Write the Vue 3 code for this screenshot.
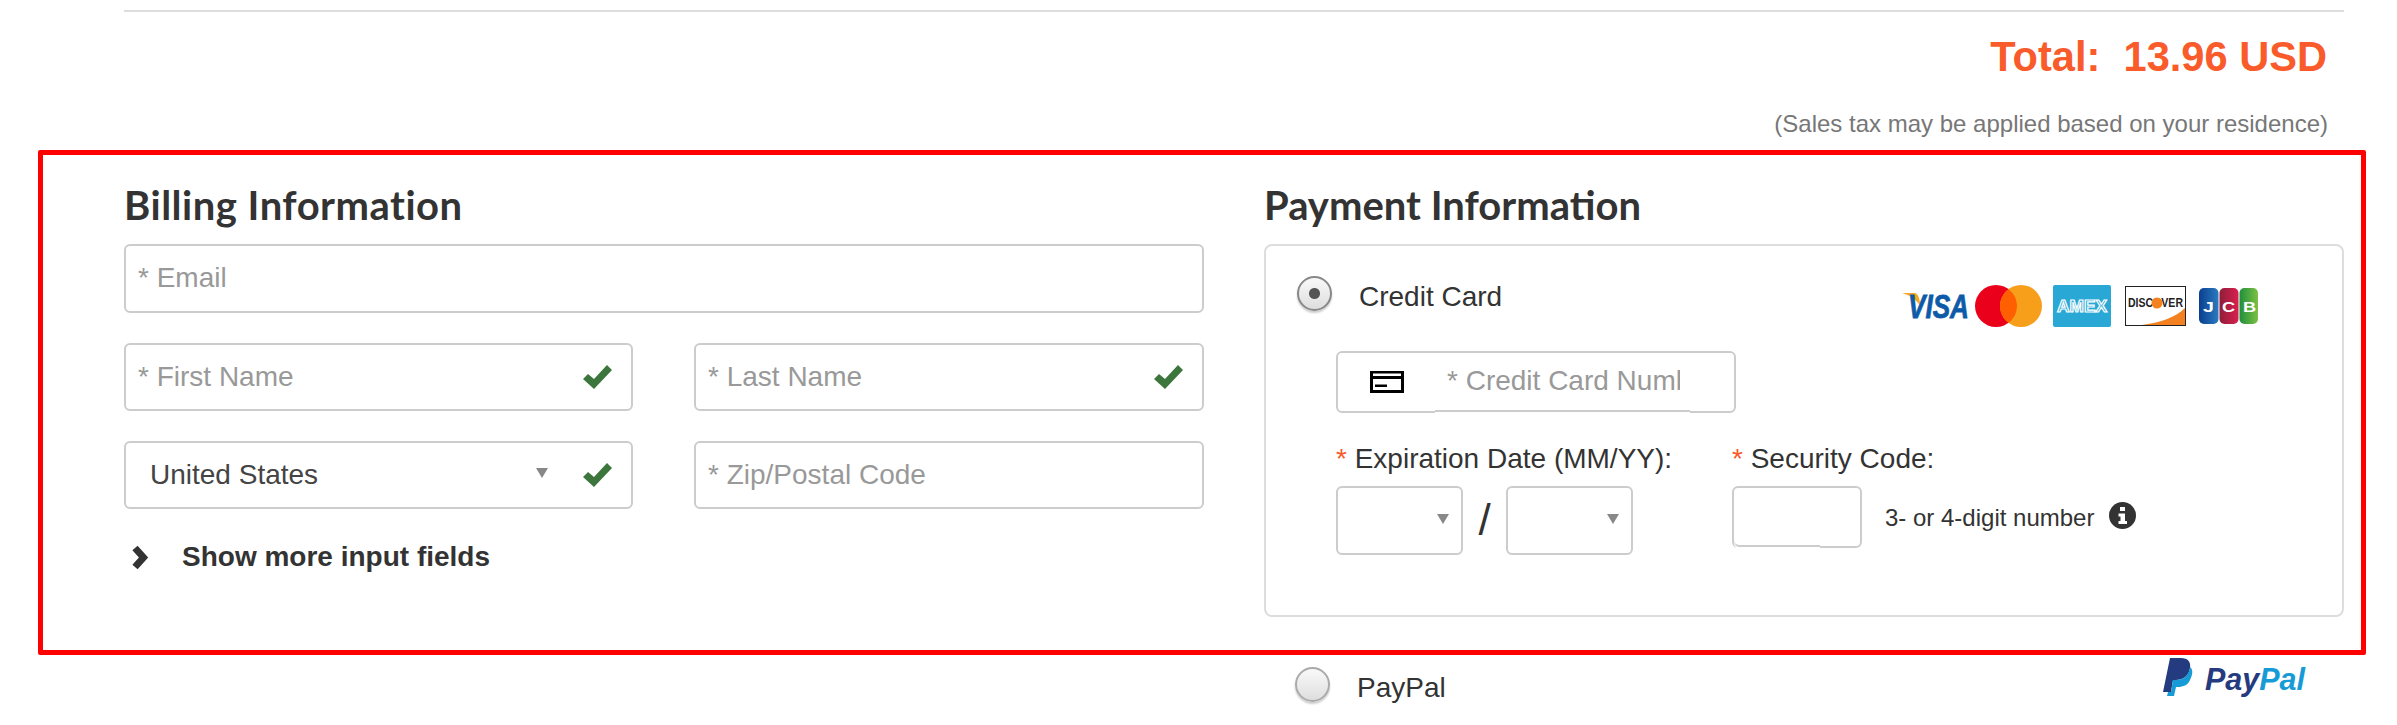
<script setup>
import { ref } from 'vue'

const method = ref('card')
const country = ref('United States')
const months = ['01', '02', '03', '04', '05', '06', '07', '08', '09', '10', '11', '12']
const years = ['24', '25', '26', '27', '28', '29']
</script>

<template>
  <div class="page">
    <div class="rule"></div>
    <div class="total">Total:&nbsp; 13.96 USD</div>
    <div class="tax">(Sales tax may be applied based on your residence)</div>

    <div class="checkout">
      <section class="billing">
        <h2>Billing Information</h2>
        <div class="fields">
          <div class="field wide email">
            <input type="text" placeholder="* Email" />
          </div>
          <div class="field">
            <input type="text" placeholder="* First Name" />
            <svg class="check" viewBox="0 0 29 24"><path d="M0 14 5 9 11 14 24 0 29 5 11 24Z" /></svg>
          </div>
          <div class="field">
            <input type="text" placeholder="* Last Name" />
            <svg class="check" viewBox="0 0 29 24"><path d="M0 14 5 9 11 14 24 0 29 5 11 24Z" /></svg>
          </div>
          <div class="field">
            <select v-model="country" class="country">
              <option>United States</option>
              <option>Canada</option>
            </select>
            <span class="caret"></span>
            <svg class="check" viewBox="0 0 29 24"><path d="M0 14 5 9 11 14 24 0 29 5 11 24Z" /></svg>
          </div>
          <div class="field">
            <input type="text" placeholder="* Zip/Postal Code" />
          </div>
        </div>
        <div class="more">
          <svg class="chevron" viewBox="0 0 19 25"><path d="M5 3 13.500 12.500 5 22" /></svg>
          <span>Show more input fields</span>
        </div>
      </section>

      <section class="payment">
        <h2>Payment Information</h2>
        <div class="panel">
          <div class="method">
            <input v-model="method" class="radio" type="radio" value="card" />
            <span class="method-name">Credit Card</span>
            <svg class="cards" viewBox="0 0 356 42" width="356" height="42">
              <defs>
                <linearGradient id="jcb-blue" x1="0" y1="0" x2="1" y2="0"><stop offset="0" stop-color="#0b3f8f" /><stop offset="1" stop-color="#2a7bc0" /></linearGradient>
                <linearGradient id="jcb-red" x1="0" y1="0" x2="1" y2="0"><stop offset="0" stop-color="#8f1d3a" /><stop offset="1" stop-color="#d9214f" /></linearGradient>
                <linearGradient id="jcb-green" x1="0" y1="0" x2="1" y2="0"><stop offset="0" stop-color="#1f8f3c" /><stop offset="1" stop-color="#7cc144" /></linearGradient>
              </defs>
              <path d="M0 8H12C15 8 16 10 17 13L19 22C15 15 8 10 0 8Z" fill="#f7a823" />
              <text x="6" y="33" class="visa" textLength="61" lengthAdjust="spacingAndGlyphs">VISA</text>
              <circle cx="94" cy="21" r="21" fill="#eb001b" />
              <circle cx="119" cy="21" r="21" fill="#f79e1b" />
              <path d="M106.5 4.13A21 21 0 0 1 106.5 37.87 21 21 0 0 1 106.5 4.13Z" fill="#ff5f00" />
              <rect x="151" width="58" height="42" rx="2" fill="#29a7d5" />
              <text x="155" y="27" class="amex" textLength="50" lengthAdjust="spacingAndGlyphs">AMEX</text>
              <rect x="223.5" y="1.5" width="60" height="39" fill="#fff" stroke="#222" />
              <path d="M240 40Q270 36 283 23V40Z" fill="#f48120" />
              <text x="226" y="22" class="discover" textLength="55" lengthAdjust="spacingAndGlyphs">DISCOVER</text>
              <circle cx="255" cy="18" r="5.500" fill="#f48120" />
              <rect x="297" y="3" width="19.500" height="36" rx="5" fill="url(#jcb-blue)" />
              <rect x="317.500" y="3" width="19" height="36" rx="5" fill="url(#jcb-red)" />
              <rect x="337.500" y="3" width="18.500" height="36" rx="5" fill="url(#jcb-green)" />
              <text transform="translate(301 27) scale(1.4 1)" class="jcb">J</text>
              <text transform="translate(320 27) scale(1.3 1)" class="jcb">C</text>
              <text transform="translate(341 27) scale(1.3 1)" class="jcb">B</text>
            </svg>
          </div>

          <div class="field card-number">
            <svg class="card-icon" viewBox="0 0 34 22">
              <path d="M0 0H34V22H0ZM3 2.500V5H31V2.500ZM3 8V19H31V8ZM5 13.500H17V16H5Z" fill-rule="evenodd" />
            </svg>
            <input class="notched" type="text" placeholder="* Credit Card Number" />
          </div>

          <div class="card-details">
            <div class="expiry">
              <label><b>*</b> Expiration Date (MM/YY):</label>
              <div class="expiry-row">
                <div class="field small">
                  <select><option></option><option v-for="m in months" :key="m">{{ m }}</option></select>
                  <span class="caret"></span>
                </div>
                <span class="slash">/</span>
                <div class="field small">
                  <select><option></option><option v-for="y in years" :key="y">{{ y }}</option></select>
                  <span class="caret"></span>
                </div>
              </div>
            </div>
            <div class="security">
              <label><b>*</b> Security Code:</label>
              <div class="security-row">
                <div class="field cvv">
                  <input class="notched" type="text" />
                </div>
                <span class="hint">3- or 4-digit number</span>
                <svg class="info" viewBox="0 0 27 27">
                  <circle cx="13.500" cy="13.500" r="13.500" fill="#333" />
                  <path d="M11 5H16V9H11ZM9.500 11.500H16V19H18V22H9.500V19H11.500V14.500H9.500Z" fill="#fff" />
                </svg>
              </div>
            </div>
          </div>
        </div>
      </section>
    </div>

    <div class="paypal">
      <input v-model="method" class="radio" type="radio" value="paypal" />
      <span class="method-name">PayPal</span>
      <svg class="paypal-logo" viewBox="0 0 143 40" width="143" height="40">
        <path d="M7 0H18C25 0 28 4 27 10 26 18 20 22 13 22H10L8 34H0Z" fill="#253b80" />
        <path d="M27 9C31 12 29 18 27 22 25 27 20 29 15 29H13L11 38H4L5 34H8L10 22H13C20 22 26 18 27 9Z" fill="#179bd7" />
        <text x="42" y="32" class="paypal-word" textLength="100" lengthAdjust="spacingAndGlyphs"><tspan class="pay">Pay</tspan><tspan class="pal">Pal</tspan></text>
      </svg>
    </div>
  </div>
</template>

<style scoped>
.page {
  width: 2397px;
  height: 725px;
  overflow: hidden;
  font-family: "Liberation Sans", Arial, sans-serif;
  color: #333;
  background: #fff;
}
.rule {
  height: 2px;
  margin: 10px 53px 0 124px;
  background: #ddd;
}
.total {
  margin-top: 20px;
  padding-right: 70px;
  text-align: right;
  font-size: 41.6px;
  line-height: 50px;
  font-weight: bold;
  color: #f95b2b;
}
.tax {
  margin-top: 27px;
  padding-right: 69px;
  text-align: right;
  font-size: 24px;
  line-height: 30px;
  color: #777;
}
.checkout {
  display: flex;
  gap: 60px;
  box-sizing: border-box;
  width: 2328px;
  height: 505px;
  margin: 11px 0 0 38px;
  padding: 25px 0 0 81px;
  border: 5px solid #f00;
  border-radius: 2px;
}
.billing {
  width: 1080px;
}
.payment {
  width: 1080px;
}
h2 {
  margin: 0 0 14px;
  font-family: Lato, "Noto Sans", sans-serif;
  font-size: 40px;
  line-height: 50px;
  font-weight: 700;
  color: #333;
}
.billing h2 {
  letter-spacing: 0.5px;
}
.fields {
  display: grid;
  grid-template-columns: 509px 510px;
  column-gap: 61px;
  row-gap: 30.5px;
}
.wide {
  grid-column: 1 / 3;
}
.field {
  display: flex;
  align-items: center;
  box-sizing: border-box;
  height: 68px;
  border: 2px solid #ccc;
  border-radius: 6px;
  background: #fff;
}
.fields .email {
  height: 69px;
  margin-bottom: -1px;
}
.fields .email input {
  padding-bottom: 2px;
}
.field input,
.field select {
  flex: 1;
  min-width: 0;
  height: 100%;
  padding: 0 0 0 12px;
  border: none;
  outline: none;
  background: transparent;
  font-family: inherit;
  font-size: 28px;
  color: #444;
  appearance: none;
}
.field input::placeholder {
  color: #999;
  opacity: 1;
}
.field .country {
  padding: 0 0 2px 24px;
}
.caret {
  width: 0;
  height: 0;
  margin: -4px 0 0;
  border-top: 10px solid #888;
  border-left: 6px solid transparent;
  border-right: 6px solid transparent;
}
.check {
  flex: none;
  width: 29px;
  height: 24px;
  margin: 0 19px 0 0;
  fill: #3c763d;
}
.caret + .check {
  margin-left: 35px;
}
.more {
  display: flex;
  align-items: center;
  gap: 33px;
  height: 32px;
  margin: 32px 0 0 6px;
  font-size: 28px;
  font-weight: bold;
}
.chevron {
  flex: none;
  width: 19px;
  height: 25px;
  fill: none;
  stroke: #333;
  stroke-width: 7;
}
.panel {
  box-sizing: border-box;
  height: 373px;
  padding: 30px 0 0 31px;
  border: 2px solid #ddd;
  border-radius: 8px;
}
.method {
  display: flex;
  align-items: flex-start;
  height: 35px;
  margin-bottom: 40px;
}
.radio {
  flex: none;
  box-sizing: border-box;
  width: 35px;
  height: 35px;
  margin: 0;
  border: 2px solid #888;
  border-radius: 50%;
  background: linear-gradient(#f9f9f9, #dedede);
  box-shadow: 0 2px 2px rgba(0, 0, 0, 0.2);
  appearance: none;
}
.radio:checked {
  background: radial-gradient(circle, #555 5px, transparent 6px), linear-gradient(#f9f9f9, #dedede);
}
.method-name {
  margin-left: 27px;
  font-size: 28px;
  line-height: 35px;
  padding-top: 3px;
}
.cards {
  flex: none;
  margin: 9px 84px 0 auto;
}
.visa {
  font-size: 34px;
  font-weight: bold;
  font-style: italic;
  fill: #0d5ba8;
  stroke: #0d5ba8;
  stroke-width: 0.8px;
}
.amex {
  font-size: 17px;
  font-weight: bold;
  fill: #29a7d5;
  stroke: #fff;
  stroke-width: 1.2px;
}
.discover {
  font-size: 13px;
  font-weight: bold;
  fill: #222;
}
.jcb {
  font-size: 14px;
  font-weight: bold;
  fill: #fff;
}
.card-number {
  width: 400px;
  height: 62px;
  margin-left: 39px;
}
.card-icon {
  flex: none;
  width: 34px;
  height: 22px;
  margin-left: 32px;
}
.card-number .notched {
  flex: none;
  box-sizing: border-box;
  width: 255px;
  height: 60px;
  margin: 0 0 0 31px;
  padding: 0 10px 0 12px;
  border-bottom: 2px solid #ccc;
  box-shadow: 0 2px 0 #fff;
}
.card-details {
  display: flex;
  margin: 30px 0 0 39px;
}
.card-details label {
  display: block;
  margin-bottom: 11px;
  font-size: 28px;
  line-height: 32px;
  color: #333;
}
.card-details b {
  font-weight: normal;
  color: #f95b2b;
}
.expiry {
  width: 396px;
}
.expiry-row,
.security-row {
  display: flex;
  align-items: flex-start;
}
.small {
  width: 127px;
  height: 69px;
}
.small .caret {
  margin: -4px 12px 0 0;
}
.slash {
  width: 43px;
  text-align: center;
  font-size: 44px;
  line-height: 68px;
}
.cvv {
  width: 130px;
  height: 62px;
}
.cvv .notched {
  flex: none;
  box-sizing: border-box;
  width: 86px;
  height: 60px;
  border-bottom: 2px solid #ccc;
  border-bottom-left-radius: 6px;
  box-shadow: 0 2px 0 #fff;
}
.hint {
  margin: 15px 0 0 23px;
  font-size: 24px;
  line-height: 34px;
}
.info {
  flex: none;
  width: 27px;
  height: 27px;
  margin: 16px 0 0 15px;
}
.paypal {
  display: flex;
  align-items: flex-start;
  margin: 12px 91px 0 1295px;
}
.paypal .radio {
  border-color: #aaa;
}
.paypal-logo {
  flex: none;
  margin: -9px 0 0 auto;
}
.paypal-word {
  font-size: 32px;
  font-weight: bold;
  font-style: italic;
}
.pay {
  fill: #253b80;
}
.pal {
  fill: #179bd7;
}
</style>
